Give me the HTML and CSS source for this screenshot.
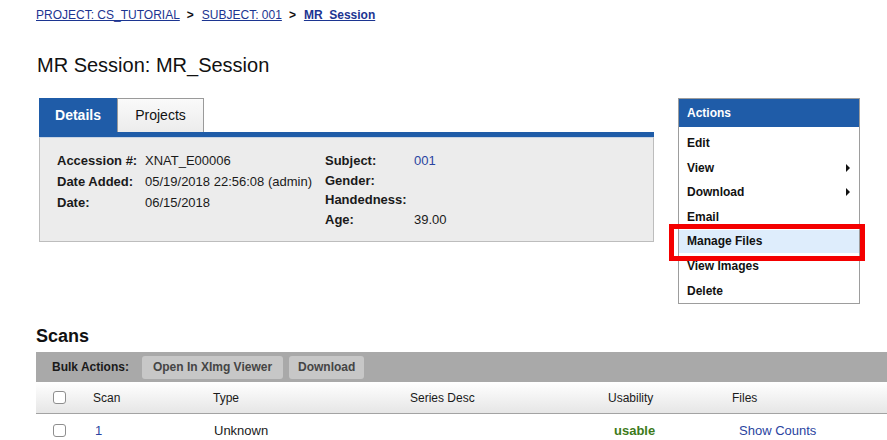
FILE: index.html
```html
<!DOCTYPE html>
<html>
<head>
<meta charset="utf-8">
<link rel="stylesheet" href="styles.css">
</head>
<body>
<div class="page">
  <div class="breadcrumb">
    <a href="#">PROJECT: CS_TUTORIAL</a><span class="sep">&gt;</span><a href="#">SUBJECT: 001</a><span class="sep">&gt;</span><a href="#" class="current">MR_Session</a>
  </div>
  <h1 class="title">MR Session: MR_Session</h1>

  <div class="top">
    <div class="main">
      <div class="tabs">
        <div class="tab active">Details</div>
        <div class="tab">Projects</div>
      </div>
      <div class="tabbar"></div>
      <div class="panel">
        <div class="grid grid-left">
          <div class="lbl">Accession #:</div><div>XNAT_E00006</div>
          <div class="lbl">Date Added:</div><div>05/19/2018 22:56:08 (admin)</div>
          <div class="lbl">Date:</div><div>06/15/2018</div>
        </div>
        <div class="grid grid-right">
          <div class="lbl">Subject:</div><div><a href="#" class="plain">001</a></div>
          <div class="lbl">Gender:</div><div></div>
          <div class="lbl">Handedness:</div><div></div>
          <div class="lbl">Age:</div><div>39.00</div>
        </div>
      </div>
    </div>

    <div class="actions">
      <div class="actions-head">Actions</div>
      <ul class="menu">
        <li>Edit</li>
        <li class="sub">View</li>
        <li class="sub">Download</li>
        <li>Email</li>
        <li class="hl">Manage Files<span class="redbox"></span></li>
        <li>View Images</li>
        <li>Delete</li>
      </ul>
    </div>
  </div>

  <h2 class="scans">Scans</h2>
  <div class="bulk">
    <span class="bulk-label">Bulk Actions:</span>
    <span class="btn btn-first">Open In XImg Viewer</span>
    <span class="btn">Download</span>
  </div>
  <table class="scan-table">
    <colgroup>
      <col class="c-check"><col class="c-scan"><col class="c-type"><col class="c-desc"><col class="c-use"><col>
    </colgroup>
    <thead>
      <tr>
        <th class="cb"><input type="checkbox"></th>
        <th>Scan</th>
        <th>Type</th>
        <th>Series Desc</th>
        <th>Usability</th>
        <th>Files</th>
      </tr>
    </thead>
    <tbody>
      <tr>
        <td class="cb"><input type="checkbox"></td>
        <td class="d-scan"><a href="#" class="plain">1</a></td>
        <td class="d-type">Unknown</td>
        <td></td>
        <td class="d-use">usable</td>
        <td class="d-files"><a href="#" class="plain">Show Counts</a></td>
      </tr>
    </tbody>
  </table>
</div>
</body>
</html>
```

FILE: styles.css
```css
* { box-sizing: border-box; }
html, body {
  margin: 0;
  padding: 0;
  overflow: hidden;
  background: #fff;
}
body {
  font-family: "Liberation Sans", Arial, sans-serif;
  font-size: 12px;
  color: #1a1a1a;
  width: 887px;
  height: 440px;
}
.page {
  padding-left: 36px;
}
.breadcrumb {
  padding-top: 8px;
  line-height: 14px;
  height: 22px;
  font-size: 12px;
}
.breadcrumb a {
  color: #1c3591;
  text-decoration: underline;
}
.breadcrumb a.current {
  font-weight: bold;
}
.breadcrumb .sep {
  font-weight: bold;
  margin: 0 8px 0 7px;
  color: #111;
}
.title {
  margin: 32px 0 0 1px;
  font-size: 20px;
  font-weight: normal;
  line-height: 23px;
  color: #111;
}
.top {
  display: flex;
  margin-top: 21px;
  margin-left: 3px;
}
.main {
  width: 615px;
}
.tabs {
  display: flex;
  height: 34px;
}
.tab {
  font-size: 14px;
  line-height: 34px;
  height: 34px;
  text-align: center;
}
.tab.active {
  width: 78px;
  background: #1f5ca8;
  color: #fff;
  font-weight: bold;
}
.tab:not(.active) {
  width: 87px;
  background: linear-gradient(#fafafa, #ececec);
  border: 1px solid #9a9a9a;
  border-bottom: none;
  color: #111;
  line-height: 33px;
}
.tabbar {
  height: 5px;
  background: #1f5ca8;
}
.panel {
  height: 105px;
  background: #ececec;
  border: 1px solid #bdbdbd;
  border-top-color: #c9d4e3;
  display: flex;
  padding: 12px 0 0 17px;
  font-size: 13px;
}
.grid {
  display: grid;
  align-content: start;
}
.grid-left {
  width: 268px;
  grid-template-columns: 88px auto;
  grid-auto-rows: 21px;
  line-height: 21px;
}
.grid-right {
  grid-template-columns: 89px auto;
  grid-auto-rows: 19.7px;
  line-height: 20px;
  padding-top: 1px;
}
.lbl {
  font-weight: bold;
}
a.plain {
  color: #2a44a0;
  text-decoration: none;
}
.actions {
  margin-left: 24px;
  width: 182px;
  border: 1px solid #9d9d9d;
  align-self: flex-start;
  height: 206px;
}
.actions-head {
  height: 28px;
  background: #1f5ca8;
  color: #fff;
  font-weight: bold;
  line-height: 28px;
  padding-left: 8px;
}
.menu {
  list-style: none;
  margin: 0;
  padding: 4px 0 0 0;
}
.menu li {
  position: relative;
  height: 24.6px;
  line-height: 24px;
  padding-left: 8px;
  font-weight: bold;
  color: #111;
}
.menu li.sub::after {
  content: "";
  position: absolute;
  right: 9px;
  top: 8px;
  border-left: 4px solid #111;
  border-top: 4px solid transparent;
  border-bottom: 4px solid transparent;
}
.menu li.hl {
  background: #deedfc;
  height: 23px;
  margin: 1px 0 0.6px;
  line-height: 23px;
}
.redbox {
  position: absolute;
  left: -10px;
  right: -6px;
  top: -6px;
  bottom: -8px;
  border: 5px solid #f40000;
  pointer-events: none;
}
.scans {
  margin: 22px 0 0 0;
  font-size: 18px;
  line-height: 20px;
  font-weight: bold;
  color: #111;
}
.bulk {
  margin-top: 6px;
  width: 900px;
  height: 30px;
  background: #a9a9a9;
  display: flex;
  align-items: center;
  padding-left: 16px;
}
.bulk-label {
  font-weight: bold;
  color: #1a1a1a;
  width: 90px;
}
.btn {
  background: #c7c7c7;
  border-radius: 3px;
  height: 23px;
  line-height: 23px;
  font-weight: bold;
  color: #454545;
  padding: 0 9px;
  margin-right: 6px;
}
.btn-first {
  width: 141px;
  text-align: center;
}
.scan-table {
  width: 900px;
  border-collapse: collapse;
  table-layout: fixed;
}
.c-check { width: 57px; }
.c-scan { width: 120px; }
.c-type { width: 197px; }
.c-desc { width: 198px; }
.c-use { width: 124px; }
.scan-table th {
  height: 31px;
  font-weight: normal;
  text-align: left;
  padding: 1px 0 0 0;
  background: linear-gradient(#ffffff, #e6e6e6);
  border-bottom: 1px solid #a3a3a3;
  color: #1a1a1a;
}
.scan-table td {
  height: 34px;
  padding: 0;
  vertical-align: middle;
  font-size: 13px;
}
.scan-table .cb {
  padding-left: 17px;
}
input[type="checkbox"] {
  appearance: none;
  -webkit-appearance: none;
  width: 13px;
  height: 13px;
  margin: 0;
  border: 1px solid #8e8e8e;
  border-radius: 3px;
  background: #fff;
  display: block;
}
.d-scan { padding-left: 2px !important; }
.d-type { padding-left: 1px !important; }
.d-use {
  padding-left: 6px !important;
  color: #3d7a1a;
  font-weight: bold;
}
.d-files { padding-left: 7px !important; }
```
